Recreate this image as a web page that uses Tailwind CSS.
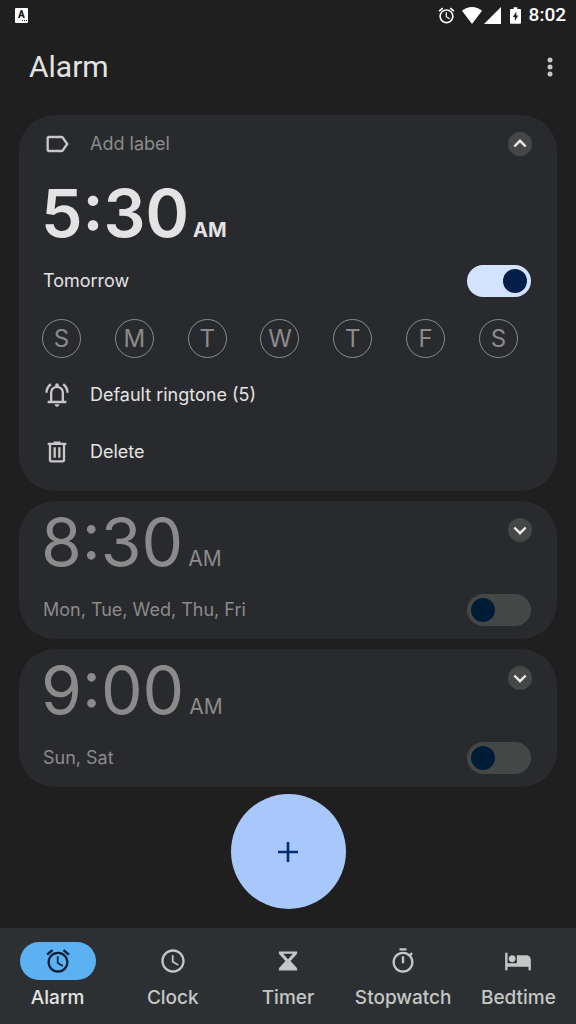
<!DOCTYPE html>
<html lang="en">
<head>
<meta charset="utf-8">
<meta name="viewport" content="width=device-width, initial-scale=1">
<title>Alarm</title>
<script src="https://cdn.jsdelivr.net/npm/@tailwindcss/browser@4"></script>
</head>
<body class="flex min-h-screen flex-col bg-[#1f1f1f] font-['Inter',sans-serif] text-[#e3e3e3]">

<!-- Status bar -->
<div class="flex h-[30px] items-center justify-between pr-2.5 pl-[15px]">
  <div class="relative h-[15px] w-[13px] rounded-[1px] bg-white text-center font-['Roboto',sans-serif] text-[10px] leading-[14px] font-black text-[#1f1f1f]">A
    <svg class="absolute right-0 bottom-px h-[2px] w-[7px]" viewBox="0 0 7 2" fill="currentColor" aria-hidden="true"><path d="M1 0h1v1H1zM3 0h1v1H3zM5 0h1v1H5z"/></svg>
  </div>
  <div class="flex items-center">
    <svg class="size-[19px]" viewBox="0 0 24 24" fill="#fff" aria-label="Alarm set"><path d="M22 5.72l-4.6-3.86-1.29 1.53 4.6 3.86L22 5.72zM7.88 3.39L6.6 1.86 2 5.71l1.29 1.53 4.59-3.85zM12.5 8H11v6l4.75 2.85.75-1.23-4-2.37V8zM12 4c-4.97 0-9 4.03-9 9s4.02 9 9 9c4.97 0 9-4.03 9-9s-4.03-9-9-9zm0 16c-3.87 0-7-3.13-7-7s3.13-7 7-7 7 3.13 7 7-3.13 7-7 7z"/></svg>
    <svg class="ml-1.5 h-[17px] w-5" viewBox="0 0 21 17" preserveAspectRatio="none" fill="#fff" aria-label="Wi-Fi"><path d="M10.500 17L0 3.800C3 1.400 6.600 0 10.500 0S18 1.400 21 3.800z"/></svg>
    <svg class="ml-0.5 size-[17px]" viewBox="0 0 17 17" fill="#fff" aria-label="Signal"><path d="M17 0v17H0z"/></svg>
    <svg class="ml-[9px] h-[17px] w-[11px]" viewBox="0 0 12 18" aria-label="Battery charging"><path fill="#fff" fill-rule="evenodd" d="M4 0h4v2h3q1 0 1 1v14q0 1-1 1H1q-1 0-1-1V3q0-1 1-1h3zM7 4.500L3 10.500h2.300V15L9 9H6.800z"/></svg>
    <span class="ml-2 font-['Roboto',sans-serif] text-[19px] leading-6 font-medium text-white">8:02</span>
  </div>
</div>

<header class="flex h-[74px] items-center justify-between pr-3 pl-[29px]">
  <h1 class="font-['Roboto',sans-serif] text-[30px] leading-9 font-normal">Alarm</h1>
  <button type="button" aria-label="More options" class="flex size-7 items-center justify-center">
    <svg class="h-5 w-1.5" viewBox="0 0 6 20" fill="#c7c7c7"><circle cx="3" cy="3" r="2.500"/><circle cx="3" cy="10" r="2.500"/><circle cx="3" cy="17" r="2.500"/></svg>
  </button>
</header>

<main class="flex flex-col gap-2.5 px-[19px] pt-[11px]">
  <section class="rounded-[36px] bg-[#292a2d] pt-[17px] pr-[26px] pb-[11px] pl-6">
    <div class="-mr-px flex items-center justify-between">
      <button type="button" class="flex items-center gap-[19px] text-lg leading-6 text-[#8b8b8b]">
        <svg class="-my-0.5 size-7" viewBox="0 0 24 24" fill="#c7c7c7" aria-hidden="true"><path d="M17.630 5.840C17.270 5.330 16.670 5 16 5L5 5.010C3.900 5.010 3 5.900 3 7v10c0 1.100.9 1.990 2 1.990L16 19c.67 0 1.270-.33 1.630-.84L22 12l-4.370-6.160zM16 17H5V7h11l3.550 5L16 17z"/></svg>
        Add label
      </button>
      <button type="button" aria-label="Collapse alarm" class="flex size-6 items-center justify-center rounded-full bg-[#454746]">
        <svg class="size-4" viewBox="0 0 16 16" fill="none" stroke="#e8e8e8" stroke-width="2.400"><path d="M2.300 10.500L8 4.800l5.700 5.700"/></svg>
      </button>
    </div>
    <button type="button" class="mt-[27px] -ml-0.5 flex h-[60px] items-baseline gap-1">
      <span class="text-[66px] leading-[60px] font-semibold">5:30</span><span class="text-xl leading-6 font-bold">AM</span>
    </button>
    <label class="mt-[22px] flex items-center justify-between text-lg leading-6">
      Tomorrow
      <input type="checkbox" role="switch" checked class="flex h-8 w-16 appearance-none items-center rounded-full bg-[#454746] px-1 before:block before:size-6 before:rounded-full before:bg-[#001d35] before:content-[''] checked:justify-end checked:bg-[#d3e3fd] checked:before:bg-[#041e49]">
    </label>
    <div class="mt-[22px] mr-[13px] -ml-px flex justify-between text-2xl text-[#8b8b8b]">
      <button type="button" aria-label="Sunday" class="flex size-[39px] items-center justify-center rounded-full border border-[#8b8b8b]">S</button>
      <button type="button" aria-label="Monday" class="flex size-[39px] items-center justify-center rounded-full border border-[#8b8b8b]">M</button>
      <button type="button" aria-label="Tuesday" class="flex size-[39px] items-center justify-center rounded-full border border-[#8b8b8b]">T</button>
      <button type="button" aria-label="Wednesday" class="flex size-[39px] items-center justify-center rounded-full border border-[#8b8b8b]">W</button>
      <button type="button" aria-label="Thursday" class="flex size-[39px] items-center justify-center rounded-full border border-[#8b8b8b]">T</button>
      <button type="button" aria-label="Friday" class="flex size-[39px] items-center justify-center rounded-full border border-[#8b8b8b]">F</button>
      <button type="button" aria-label="Saturday" class="flex size-[39px] items-center justify-center rounded-full border border-[#8b8b8b]">S</button>
    </div>
    <button type="button" class="mt-2 flex h-[57px] w-full items-center gap-[19px] text-lg">
      <svg class="size-7" viewBox="0 0 24 24" fill="#c7c7c7" aria-hidden="true"><path d="M4 19v-2h2v-7q0-2.075 1.250-3.687T10.500 4.200v-.7q0-.625.438-1.062T12 2t1.063.438T13.500 3.500v.7q2 .5 3.250 2.113T18 10v7h2v2zm8 3q-.825 0-1.412-.587T10 20h4q0 .825-.587 1.413T12 22m-4-5h8v-7q0-1.650-1.175-2.825T12 6T9.175 7.175T8 10zM2 10q0-2.500 1.113-4.587T6.100 1.950l1.175 1.600q-1.500 1.100-2.387 2.775T4 10zm18 0q0-2-.888-3.675T16.726 3.550l1.175-1.600q1.875 1.375 2.988 3.463T22 10z"/></svg>
      Default ringtone (5)
    </button>
    <button type="button" class="flex h-[57px] w-full items-center gap-[19px] text-lg">
      <svg class="size-7" viewBox="0 0 24 24" fill="#c7c7c7" aria-hidden="true"><path d="M7 21q-.825 0-1.412-.587T5 19V6H4V4h5V3h6v1h5v2h-1v13q0 .825-.587 1.413T17 21zM17 6H7v13h10zM9 17h2V8H9zm4 0h2V8h-2z"/></svg>
      Delete
    </button>
  </section>

  <section class="rounded-[36px] bg-[#292a2d] pt-[11px] pr-[26px] pb-[13px] pl-6 text-[#8b8b8b]">
    <div class="-mr-px -ml-0.5 flex items-start justify-between">
      <button type="button" class="flex h-[60px] items-baseline gap-[5px]">
        <span class="text-[66px] leading-[60px]">8:30</span><span class="text-[21px] leading-6">AM</span>
      </button>
      <button type="button" aria-label="Expand alarm" class="mt-1.5 flex size-6 items-center justify-center rounded-full bg-[#454746]">
        <svg class="size-4" viewBox="0 0 16 16" fill="none" stroke="#e8e8e8" stroke-width="2.400"><path d="M2.300 5.500L8 11.200l5.700-5.700"/></svg>
      </button>
    </div>
    <label class="mt-[22px] flex items-center justify-between text-lg leading-6">
      Mon, Tue, Wed, Thu, Fri
      <input type="checkbox" role="switch" class="flex h-8 w-16 appearance-none items-center rounded-full bg-[#454746] px-1 before:block before:size-6 before:rounded-full before:bg-[#001d35] before:content-[''] checked:justify-end checked:bg-[#d3e3fd] checked:before:bg-[#041e49]">
    </label>
  </section>

  <section class="rounded-[36px] bg-[#292a2d] pt-[11px] pr-[26px] pb-[13px] pl-6 text-[#8b8b8b]">
    <div class="-mr-px -ml-0.5 flex items-start justify-between">
      <button type="button" class="flex h-[60px] items-baseline gap-[5px]">
        <span class="text-[66px] leading-[60px]">9:00</span><span class="text-[21px] leading-6">AM</span>
      </button>
      <button type="button" aria-label="Expand alarm" class="mt-1.5 flex size-6 items-center justify-center rounded-full bg-[#454746]">
        <svg class="size-4" viewBox="0 0 16 16" fill="none" stroke="#e8e8e8" stroke-width="2.400"><path d="M2.300 5.500L8 11.200l5.700-5.700"/></svg>
      </button>
    </div>
    <label class="mt-[22px] flex items-center justify-between text-lg leading-6">
      Sun, Sat
      <input type="checkbox" role="switch" class="flex h-8 w-16 appearance-none items-center rounded-full bg-[#454746] px-1 before:block before:size-6 before:rounded-full before:bg-[#001d35] before:content-[''] checked:justify-end checked:bg-[#d3e3fd] checked:before:bg-[#041e49]">
    </label>
  </section>
</main>

<button type="button" aria-label="Add alarm" class="mx-auto mt-[7px] mb-[19px] flex size-[115px] items-center justify-center rounded-full bg-[#a8c7fa]">
  <svg class="size-5" viewBox="0 0 20 20" stroke="#062e6f" stroke-width="2.600"><path d="M10 0v20M0 10h20"/></svg>
</button>

<nav class="mt-auto grid h-24 grid-cols-5 bg-[#2d3032] pt-3.5 text-[19px] leading-6 font-medium text-[#c4c7c5]">
  <a href="#alarm" aria-current="page" class="flex flex-col items-center gap-1.5 text-[#e3e3e3]">
    <span class="flex h-[38px] w-[76px] items-center justify-center rounded-full bg-[#5bb1f2]">
      <svg class="size-7" viewBox="0 0 24 24" fill="#001d35" aria-hidden="true"><path d="M22 5.720l-4.600-3.860-1.290 1.530 4.600 3.860L22 5.720zM7.880 3.390L6.600 1.860 2 5.710l1.290 1.530 4.590-3.850zM12.500 8H11v6l4.750 2.850.75-1.230-4-2.370V8zM12 4c-4.970 0-9 4.030-9 9s4.020 9 9 9c4.970 0 9-4.030 9-9s-4.030-9-9-9zm0 16c-3.870 0-7-3.130-7-7s3.130-7 7-7 7 3.130 7 7-3.130 7-7 7z"/></svg>
    </span>Alarm
  </a>
  <a href="#clock" class="flex flex-col items-center gap-1.5">
    <span class="flex h-[38px] items-center">
      <svg class="size-7" viewBox="0 0 24 24" fill="currentColor" aria-hidden="true"><path d="M11.990 2C6.470 2 2 6.480 2 12s4.470 10 9.990 10C17.520 22 22 17.520 22 12S17.520 2 11.990 2zM12 20c-4.420 0-8-3.580-8-8s3.580-8 8-8 8 3.580 8 8-3.580 8-8 8zm.5-13H11v6l5.250 3.150.75-1.230-4.500-2.670z"/></svg>
    </span>Clock
  </a>
  <a href="#timer" class="flex flex-col items-center gap-1.5">
    <span class="flex h-[38px] items-center">
      <svg class="size-7" viewBox="0 0 24 24" fill="currentColor" fill-rule="evenodd" aria-hidden="true"><path d="M4.200 3.800h15.600v2L14.200 12l5.600 6.200v2H4.200v-2L9.800 12 4.200 5.800zM7.800 5.800L12 10.500l4.200-4.700z"/></svg>
    </span>Timer
  </a>
  <a href="#stopwatch" class="flex flex-col items-center gap-1.5">
    <span class="flex h-[38px] items-center">
      <svg class="size-7" viewBox="0 0 24 24" fill="currentColor" aria-hidden="true"><path d="M15 1H9v2h6V1zm-4 13h2V8h-2v6zm8.030-6.610l1.420-1.420c-.43-.51-.9-.99-1.410-1.410l-1.420 1.420C16.070 4.740 14.120 4 12 4c-4.970 0-9 4.030-9 9s4.020 9 9 9 9-4.030 9-9c0-2.120-.74-4.070-1.970-5.610zM12 20c-3.870 0-7-3.130-7-7s3.130-7 7-7 7 3.130 7 7-3.130 7-7 7z"/></svg>
    </span>Stopwatch
  </a>
  <a href="#bedtime" class="flex flex-col items-center gap-1.5">
    <span class="flex h-[38px] items-center">
      <svg class="size-7" viewBox="0 0 24 24" fill="currentColor" aria-hidden="true"><path d="M7 13c1.660 0 3-1.340 3-3S8.660 7 7 7s-3 1.340-3 3 1.340 3 3 3zm12-6h-8v7H3V5H1v15h2v-3h18v3h2v-9c0-2.210-1.790-4-4-4z"/></svg>
    </span>Bedtime
  </a>
</nav>
</body>
</html>
